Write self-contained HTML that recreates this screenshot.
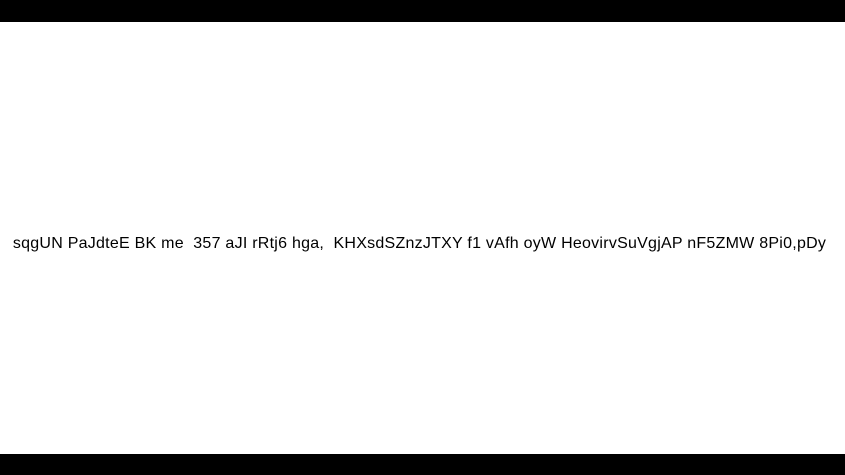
<!DOCTYPE html>
<html><head><style>
html,body{margin:0;padding:0;width:845px;height:475px;background:#fff;overflow:hidden}
.t{position:absolute;top:0;left:0;width:845px;height:22px;background:#000}
.b{position:absolute;top:454px;left:0;width:845px;height:21px;background:#000}
.x{position:absolute;top:233px;left:-3px;width:845px;text-align:center;font-family:"Liberation Sans",sans-serif;font-size:16px;line-height:22px;color:#000;white-space:pre;letter-spacing:0.25px}
</style></head><body>
<div class="t"></div>
<div class="x">sqgUN PaJdteE BK me  357 aJI rRtj6 hga,  KHXsdSZnzJTXY f1 vAfh oyW HeovirvSuVgjAP nF5ZMW 8Pi0,pDy</div>
<div class="b"></div>
</body></html>
